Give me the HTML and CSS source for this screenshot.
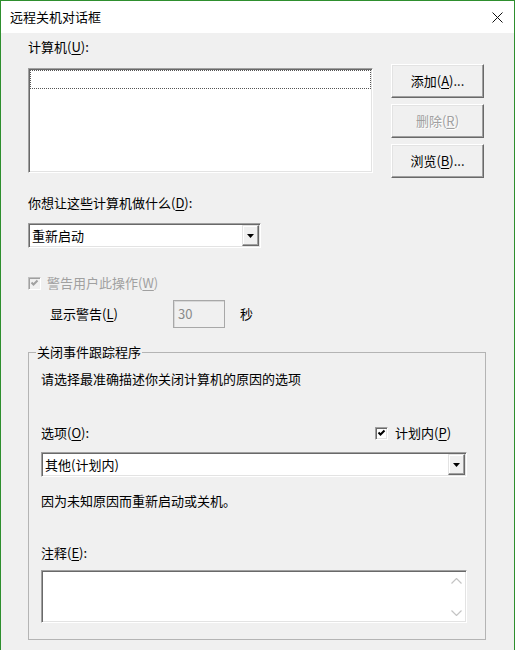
FILE: index.html
```html
<!DOCTYPE html>
<html lang="zh-CN">
<head>
<meta charset="utf-8">
<title>远程关机对话框</title>
<link rel="stylesheet" href="styles.css">
</head>
<body>
<div class="window">
  <div class="titlebar">
    <span class="title">远程关机对话框</span>
    <svg class="close" width="11" height="11" viewBox="0 0 11 11"><path d="M0.5 0.5L10.5 10.5M10.5 0.5L0.5 10.5" stroke="#111" stroke-width="1" fill="none"/></svg>
  </div>
  <div class="content">
    <div class="l-computers">计算机(<u>U</u>):</div>
    <div class="computers-row">
      <div class="listbox sunken"><div class="focus-item"></div></div>
      <div class="buttons">
        <div class="btn">添加(<u>A</u>)...</div>
        <div class="btn disabled">删除(<u>R</u>)</div>
        <div class="btn">浏览(<u>B</u>)...</div>
      </div>
    </div>
    <div class="l-action">你想让这些计算机做什么(<u>D</u>):</div>
    <div class="combo sunken combo-action">
      <span class="combo-text">重新启动</span>
      <span class="drop"><svg width="7" height="4" viewBox="0 0 7 4"><path d="M0 0H7L3.5 4Z" fill="#000"/></svg></span>
    </div>
    <div class="check-row warn">
      <span class="checkbox sunken off"><svg width="9" height="9" viewBox="0 0 9 9"><path d="M1.5 3.5L3.5 5.5L7.5 1.5" stroke="#a0a0a0" stroke-width="2" fill="none"/></svg></span>
      <span class="check-text disabled-text">警告用户此操作(<u>W</u>)</span>
    </div>
    <div class="warn-row">
      <span class="warn-label">显示警告(<u>L</u>)</span>
      <span class="numbox">30</span>
      <span class="unit">秒</span>
    </div>
    <fieldset class="group">
      <legend>关闭事件跟踪程序</legend>
      <div class="desc">请选择最准确描述你关闭计算机的原因的选项</div>
      <div class="options-row">
        <span class="opt-label">选项(<u>O</u>):</span>
        <span class="checkbox sunken on"><svg width="9" height="9" viewBox="0 0 9 9"><path d="M1.5 3.5L3.5 5.5L7.5 1.5" stroke="#000" stroke-width="2" fill="none"/></svg></span>
        <span class="check-text">计划内(<u>P</u>)</span>
      </div>
      <div class="combo sunken combo-reason">
        <span class="combo-text">其他(计划内)</span>
        <span class="drop"><svg width="7" height="4" viewBox="0 0 7 4"><path d="M0 0H7L3.5 4Z" fill="#000"/></svg></span>
      </div>
      <div class="reason">因为未知原因而重新启动或关机。</div>
      <div class="comment-label">注释(<u>E</u>):</div>
      <div class="textarea sunken">
        <div class="vscroll">
          <span class="sbtn"><svg width="11" height="6" viewBox="0 0 11 6"><path d="M0.5 5.5L5.5 0.5L10.5 5.5" stroke="#c4c4c4" stroke-width="1.2" fill="none"/></svg></span>
          <span class="sbtn"><svg width="11" height="6" viewBox="0 0 11 6"><path d="M0.5 0.5L5.5 5.5L10.5 0.5" stroke="#c4c4c4" stroke-width="1.2" fill="none"/></svg></span>
        </div>
      </div>
    </fieldset>
  </div>
</div>
</body>
</html>
```
FILE: styles.css
```css
* { box-sizing: border-box; }
html, body { margin: 0; padding: 0; background: #f0f0f0; }
body {
  font-family: "Noto Sans CJK SC", "Noto Sans", sans-serif;
  font-size: 13px;
  line-height: 16px;
  color: #000;
}
u { text-decoration: underline; text-underline-offset: 2px; }

.window {
  width: 515px;
  height: 650px;
  border: 1px solid #2e8f2e;
  border-bottom: none;
  background: #f0f0f0;
  overflow: hidden;
}

.titlebar {
  height: 32px;
  background: #fff;
  display: flex;
  align-items: center;
  justify-content: space-between;
  padding: 0 11px 0 9px;
}
.title { color: #000; }
.close { display: block; }

.content { padding: 0 0 0 27px; }

.sunken {
  border: 1px solid;
  border-color: #a0a0a0 #fff #fff #a0a0a0;
  box-shadow: inset 1px 1px 0 #696969, inset -1px -1px 0 #e3e3e3;
}

.l-computers { margin-top: 6px; }

.computers-row { display: flex; margin-top: 9px; align-items: flex-start; }
.listbox {
  width: 345px;
  height: 105px;
  margin-top: 4px;
  background: #fff;
  padding: 1px;
}
.focus-item { height: 19px; border: 1px dotted #555; }

.buttons {
  margin-left: 18px;
  width: 93px;
  display: flex;
  flex-direction: column;
  gap: 6px;
}
.btn {
  height: 34px;
  display: flex;
  align-items: center;
  justify-content: center;
  background: #f0f0f0;
  border: 1px solid;
  border-color: #fff #696969 #696969 #fff;
  box-shadow: inset -1px -1px 0 #a0a0a0, inset 1px 1px 0 #e3e3e3;
}
.btn.disabled { color: #a0a0a0; text-shadow: 1px 1px 0 #fff; }
.disabled-text { color: #a0a0a0; }

.l-action { margin-top: 17px; }

.combo {
  height: 25px;
  display: flex;
  align-items: center;
  background: #fff;
  padding: 1px;
}
.combo-action { margin-top: 12px; width: 233px; }
.combo-text { padding-left: 2px; }
.drop {
  margin-left: auto;
  width: 17px;
  height: 21px;
  display: flex;
  align-items: center;
  justify-content: center;
  background: #f0f0f0;
  border: 1px solid;
  border-color: #e3e3e3 #696969 #696969 #e3e3e3;
  box-shadow: inset -1px -1px 0 #a0a0a0, inset 1px 1px 0 #fff;
}
.drop svg { display: block; margin-top: 1px; }

.check-row { display: flex; align-items: center; }
.warn { margin-top: 27px; }
.checkbox {
  width: 13px;
  height: 13px;
  display: flex;
  align-items: center;
  justify-content: center;
  flex: none;
}
.checkbox svg { display: block; }
.checkbox.on { background: #fff; }
.checkbox.off {
  background: #f0f0f0;
  border-color: #c0c0c0 #fff #fff #c0c0c0;
  box-shadow: inset 1px 1px 0 #a0a0a0, inset -1px -1px 0 #f0f0f0;
}
.check-text { margin-left: 6px; }

.warn-row {
  margin-top: 9px;
  height: 28px;
  display: flex;
  align-items: center;
  padding-left: 22px;
}
.warn-label { width: 123px; }
.numbox {
  width: 52px;
  height: 28px;
  border: 1px solid #a8a8a8;
  box-shadow: inset 1px 1px 0 #d8d8d8;
  background: #f0f0f0;
  color: #8a8a8a;
  padding-left: 4px;
  display: flex;
  align-items: center;
}
.unit { margin-left: 15px; }

.group {
  margin: 16px 0 0 0;
  padding: 0 18px 16px 12px;
  width: 458px;
  min-width: 0;
  border: 1px solid #b4b4b4;
}
.group legend {
  padding: 0 1px;
  margin-left: -5px;
  line-height: 16px;
}
.desc { margin-top: 11px; }
.options-row { margin-top: 38px; display: flex; align-items: center; }
.opt-label { width: 334px; }
.options-row .check-text { margin-left: 7px; }
.combo-reason { margin-top: 11px; width: 426px; }
.reason { margin-top: 16px; }
.comment-label { margin-top: 36px; }
.textarea {
  margin-top: 9px;
  height: 53px;
  background: #fff;
  padding: 1px;
  display: flex;
}
.vscroll {
  margin-left: auto;
  width: 17px;
  display: flex;
  flex-direction: column;
  justify-content: space-between;
}
.sbtn {
  height: 17px;
  display: flex;
  align-items: center;
  justify-content: center;
}
.sbtn svg { display: block; }
```
